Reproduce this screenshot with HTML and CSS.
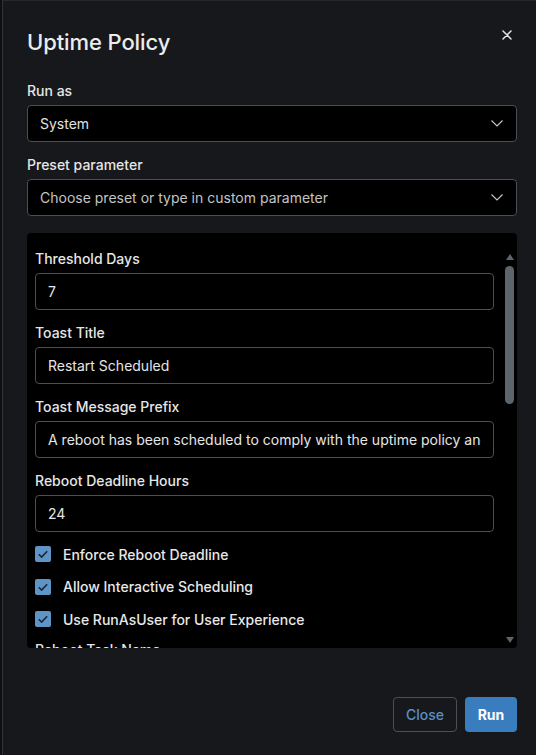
FILE: index.html
```html
<!DOCTYPE html>
<html>
<head>
<meta charset="utf-8">
<link rel="stylesheet" href="styles.css">
</head>
<body>
<div class="modal">
  <div class="header">
    <h1 class="title">Uptime Policy</h1>
    <button class="close-x" aria-label="Close">
      <svg width="10" height="10" viewBox="0 0 10 10"><path d="M1 1L9 9M9 1L1 9" stroke="#e6e6e6" stroke-width="1.5" stroke-linecap="round"/></svg>
    </button>
  </div>

  <label class="label">Run as</label>
  <div class="select">
    <span class="select-value">System</span>
    <svg class="chev" width="12" height="7" viewBox="0 0 12 7"><path d="M0.5 0.5L6 6L11.5 0.5" fill="none" stroke="#c9c9c9" stroke-width="1.1"/></svg>
  </div>

  <label class="label gap-top">Preset parameter</label>
  <div class="select">
    <span class="select-value placeholder">Choose preset or type in custom parameter</span>
    <svg class="chev" width="12" height="7" viewBox="0 0 12 7"><path d="M0.5 0.5L6 6L11.5 0.5" fill="none" stroke="#c9c9c9" stroke-width="1.1"/></svg>
  </div>

  <div class="params">
    <div class="params-content">
      <div class="field">
        <label class="label">Threshold Days</label>
        <input class="input" type="text" value="7" readonly>
      </div>
      <div class="field">
        <label class="label">Toast Title</label>
        <input class="input" type="text" value="Restart Scheduled" readonly>
      </div>
      <div class="field">
        <label class="label">Toast Message Prefix</label>
        <input class="input" type="text" value="A reboot has been scheduled to comply with the uptime policy and will occur soon." readonly>
      </div>
      <div class="field">
        <label class="label">Reboot Deadline Hours</label>
        <input class="input" type="text" value="24" readonly>
      </div>
      <div class="check-row first">
        <span class="checkbox"><svg width="16" height="16" viewBox="0 0 16 16"><path d="M3.8 8.2L6.6 11L12.2 5.2" fill="none" stroke="#1b2633" stroke-width="1.6"/></svg></span>
        <span class="check-label">Enforce Reboot Deadline</span>
      </div>
      <div class="check-row">
        <span class="checkbox"><svg width="16" height="16" viewBox="0 0 16 16"><path d="M3.8 8.2L6.6 11L12.2 5.2" fill="none" stroke="#1b2633" stroke-width="1.6"/></svg></span>
        <span class="check-label">Allow Interactive Scheduling</span>
      </div>
      <div class="check-row">
        <span class="checkbox"><svg width="16" height="16" viewBox="0 0 16 16"><path d="M3.8 8.2L6.6 11L12.2 5.2" fill="none" stroke="#1b2633" stroke-width="1.6"/></svg></span>
        <span class="check-label">Use RunAsUser for User Experience</span>
      </div>
      <div class="field last">
        <label class="label">Reboot Task Name</label>
        <input class="input" type="text" value="UptimePolicyReboot" readonly>
      </div>
    </div>
    <div class="scrollbar">
      <span class="arrow-up"></span>
      <span class="thumb"></span>
      <span class="spacer"></span>
      <span class="arrow-down"></span>
    </div>
  </div>

  <div class="footer">
    <button class="btn btn-close">Close</button>
    <button class="btn btn-run">Run</button>
  </div>
</div>
</body>
</html>
```

FILE: styles.css
```css
* { box-sizing: border-box; }
html, body {
  margin: 0;
  padding: 0;
  height: 100%;
}
body {
  background: #0e0f11;
  font-family: Inter, "Noto Sans", "Liberation Sans", sans-serif;
  color: #e8e8e8;
  overflow: hidden;
}
.modal {
  margin-left: 2px;
  height: 755px;
  background: #17181b;
  border-left: 1px solid #303337;
  border-top: 1px solid #26282b;
  padding: 27px 19px 0 24px;
  display: flex;
  flex-direction: column;
}
.header {
  display: flex;
  justify-content: space-between;
  align-items: flex-start;
}
.title {
  margin: 0;
  font-size: 22px;
  line-height: 28px;
  font-weight: 500;
  color: #ececec;
  letter-spacing: -0.1px;
}
.close-x {
  background: none;
  border: none;
  padding: 0;
  margin: 2px 5px 0 0;
  width: 10px;
  height: 10px;
  display: flex;
  cursor: pointer;
}
.label {
  display: block;
  font-size: 14px;
  line-height: 20px;
  font-weight: 500;
  color: #e6e6e6;
  margin-top: 25px;
  margin-bottom: 4px;
}
.label.gap-top { margin-top: 13px; }
.select {
  height: 37px;
  background: #000;
  border: 1px solid #4a4f55;
  border-radius: 4px;
  display: flex;
  align-items: center;
  justify-content: space-between;
  padding: 0 13px 0 12px;
}
.select-value {
  font-size: 14px;
  color: #e2e2e2;
}
.select-value.placeholder { color: #c4c4c4; }
.chev { display: block; }

.params {
  margin-top: 17px;
  height: 415px;
  background: #000;
  border-radius: 4px;
  display: flex;
  overflow: hidden;
}
.params-content {
  flex: 1;
  padding: 16px 0 0 8px;
  overflow: hidden;
}
.field .label { margin-top: 0; }
.field + .field { margin-top: 13px; }
.field.last { margin-top: 11px; }
.input {
  display: block;
  width: 100%;
  height: 37px;
  background: #000;
  border: 1px solid #4a4f55;
  border-radius: 4px;
  padding: 0 12px;
  font-family: inherit;
  font-size: 14px;
  color: #e6e6e6;
  outline: none;
}
.check-row {
  display: flex;
  align-items: center;
  gap: 12px;
  height: 20px;
  margin-top: 12.5px;
}
.check-row.first { margin-top: 12px; }
.checkbox {
  width: 16px;
  height: 16px;
  border-radius: 2px;
  background: #5f94c9;
  display: flex;
}
.check-label {
  font-size: 14px;
  font-weight: 500;
  color: #e8e8e8;
}

.scrollbar {
  width: 9px;
  margin: 0 3px 0 11px;
  display: flex;
  flex-direction: column;
  align-items: center;
  padding: 21px 0 5px;
}
.arrow-up {
  width: 0;
  height: 0;
  border-left: 4px solid transparent;
  border-right: 4px solid transparent;
  border-bottom: 6px solid #5d646b;
}
.thumb {
  margin-top: 6px;
  width: 9px;
  height: 138px;
  border-radius: 5px;
  background: #5d656c;
}
.spacer { flex: 1; }
.arrow-down {
  width: 0;
  height: 0;
  border-left: 4px solid transparent;
  border-right: 4px solid transparent;
  border-top: 6px solid #5d646b;
}

.footer {
  margin-top: 49px;
  display: flex;
  justify-content: flex-end;
  gap: 8px;
}
.btn {
  height: 35px;
  border-radius: 4px;
  font-family: inherit;
  font-size: 14px;
  cursor: pointer;
}
.btn-close {
  width: 64px;
  background: transparent;
  border: 1px solid #4a5056;
  color: #5b8fc5;
  font-weight: 500;
}
.btn-run {
  width: 52px;
  background: #3a7dbe;
  border: none;
  color: #fff;
  font-weight: 700;
}
```
